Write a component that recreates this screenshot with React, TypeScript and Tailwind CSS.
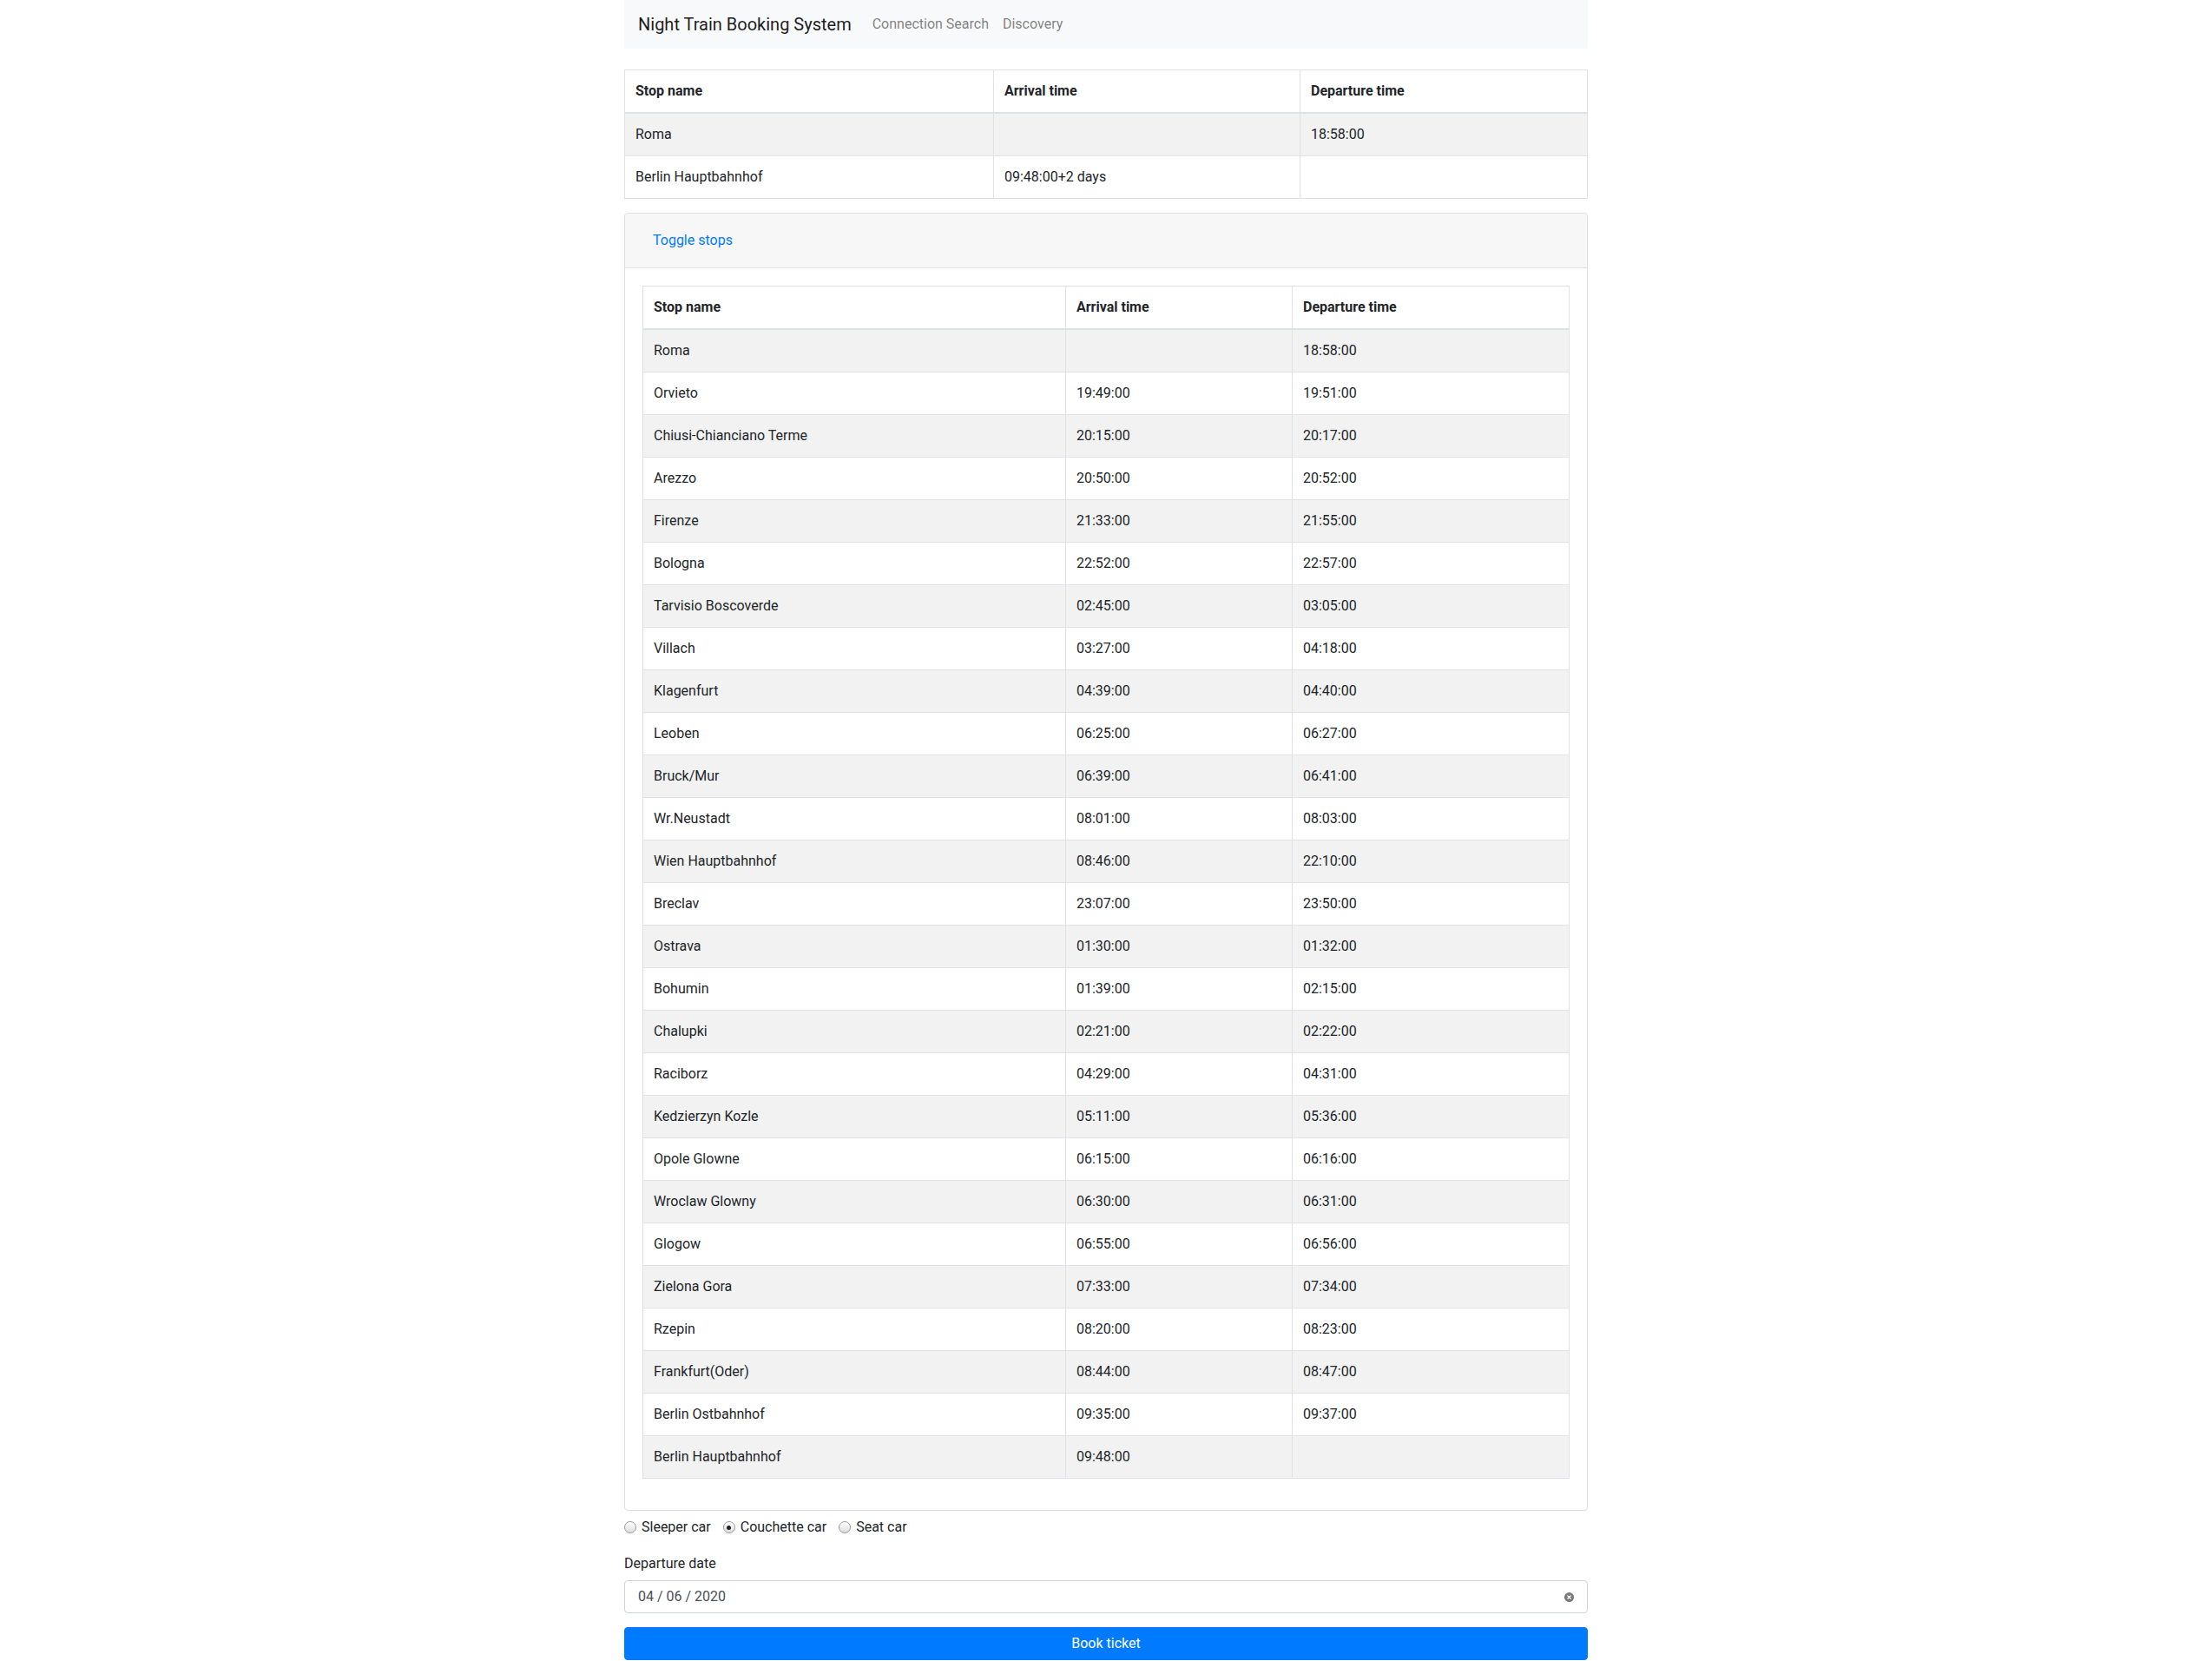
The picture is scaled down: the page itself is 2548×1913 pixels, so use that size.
import React from "react";

const stops: [string, string, string][] = [
  ["Roma", "", "18:58:00"],
  ["Orvieto", "19:49:00", "19:51:00"],
  ["Chiusi-Chianciano Terme", "20:15:00", "20:17:00"],
  ["Arezzo", "20:50:00", "20:52:00"],
  ["Firenze", "21:33:00", "21:55:00"],
  ["Bologna", "22:52:00", "22:57:00"],
  ["Tarvisio Boscoverde", "02:45:00", "03:05:00"],
  ["Villach", "03:27:00", "04:18:00"],
  ["Klagenfurt", "04:39:00", "04:40:00"],
  ["Leoben", "06:25:00", "06:27:00"],
  ["Bruck/Mur", "06:39:00", "06:41:00"],
  ["Wr.Neustadt", "08:01:00", "08:03:00"],
  ["Wien Hauptbahnhof", "08:46:00", "22:10:00"],
  ["Breclav", "23:07:00", "23:50:00"],
  ["Ostrava", "01:30:00", "01:32:00"],
  ["Bohumin", "01:39:00", "02:15:00"],
  ["Chalupki", "02:21:00", "02:22:00"],
  ["Raciborz", "04:29:00", "04:31:00"],
  ["Kedzierzyn Kozle", "05:11:00", "05:36:00"],
  ["Opole Glowne", "06:15:00", "06:16:00"],
  ["Wroclaw Glowny", "06:30:00", "06:31:00"],
  ["Glogow", "06:55:00", "06:56:00"],
  ["Zielona Gora", "07:33:00", "07:34:00"],
  ["Rzepin", "08:20:00", "08:23:00"],
  ["Frankfurt(Oder)", "08:44:00", "08:47:00"],
  ["Berlin Ostbahnhof", "09:35:00", "09:37:00"],
  ["Berlin Hauptbahnhof", "09:48:00", ""],
];

const summary: [string, string, string][] = [
  ["Roma", "", "18:58:00"],
  ["Berlin Hauptbahnhof", "09:48:00+2 days", ""],
];

function StopTable({
  rows,
  widths,
}: {
  rows: [string, string, string][];
  widths: [string, string, string];
}) {
  return (
    <table className="w-full table-fixed border-collapse border border-[#dee2e6] text-[16px] leading-6 text-[#212529]">
      <colgroup>
        <col className={widths[0]} />
        <col className={widths[1]} />
        <col />
      </colgroup>
      <thead>
        <tr>
          <th className="border border-[#dee2e6] border-b-2 px-3 py-3 text-left font-bold align-bottom">
            Stop name
          </th>
          <th className="border border-[#dee2e6] border-b-2 px-3 py-3 text-left font-bold align-bottom">
            Arrival time
          </th>
          <th className="border border-[#dee2e6] border-b-2 px-3 py-3 text-left font-bold align-bottom">
            Departure time
          </th>
        </tr>
      </thead>
      <tbody>
        {rows.map((r, i) => (
          <tr key={i} className={i % 2 === 0 ? "bg-[#f2f2f2]" : "bg-white"}>
            <td className="border border-[#dee2e6] px-3 py-3">{r[0]}</td>
            <td className="border border-[#dee2e6] px-3 py-3">{r[1]}</td>
            <td className="border border-[#dee2e6] px-3 py-3">{r[2]}</td>
          </tr>
        ))}
      </tbody>
    </table>
  );
}

function Radio({ label, checked }: { label: string; checked?: boolean }) {
  return (
    <label className="inline-flex items-center mr-[14px]">
      <span className="w-[14px] h-[14px] rounded-full border border-[#9a9a9a] bg-gradient-to-b from-white to-[#dedede] flex items-center justify-center mr-[6px]">
        {checked && <span className="w-[5px] h-[5px] rounded-full bg-[#222]" />}
      </span>
      <span>{label}</span>
    </label>
  );
}

export default function App() {
  return (
    <div
      className="min-h-screen bg-white text-[#212529] text-[16px] leading-6"
      style={{ fontFamily: "Roboto, 'Noto Sans', sans-serif" }}
    >
      <div className="w-[1140px] mx-auto px-[15px]">
        <nav className="bg-[#f8f9fa] h-[56px] px-4 flex items-center">
          <span className="text-[20px] leading-[30px] text-[rgba(0,0,0,0.9)] mr-4">
            Night Train Booking System
          </span>
          <span className="px-2 text-[rgba(0,0,0,0.5)]">Connection Search</span>
          <span className="px-2 text-[rgba(0,0,0,0.5)]">Discovery</span>
        </nav>

        <div className="mt-6 mb-4">
          <StopTable rows={summary} widths={["w-[425px]", "w-[353px]", ""]} />
        </div>

        <div className="border border-[#dfdfdf] rounded">
          <div className="bg-[#f7f7f7] border-b border-[#dfdfdf] px-5 py-3 rounded-t">
            <span className="inline-block px-3 py-[7px] text-[#007bff] leading-6">Toggle stops</span>
          </div>
          <div className="p-5">
            <div className="mb-4">
              <StopTable rows={stops} widths={["w-[487px]", "w-[261px]", ""]} />
            </div>
          </div>
        </div>

        <div className="mt-[7px] flex items-center h-6">
          <Radio label="Sleeper car" />
          <Radio label="Couchette car" checked />
          <Radio label="Seat car" />
        </div>

        <div className="mt-[18px]">
          <div className="mb-[7px]">Departure date</div>
          <div className="h-[38px] border border-[#ced4da] rounded flex items-center justify-between pl-[15px] pr-[15px] text-[#495057]">
            <span>04 / 06 / 2020</span>
            <span className="w-[11px] h-[11px] rounded-full bg-[#7a7a7a] flex items-center justify-center">
              <svg width="7" height="7" viewBox="0 0 7 7">
                <path d="M1.5 1.5 L5.5 5.5 M5.5 1.5 L1.5 5.5" stroke="white" strokeWidth="1.3" />
              </svg>
            </span>
          </div>
        </div>

        <button className="mt-4 w-full h-[38px] bg-[#007bff] text-white rounded border border-[#007bff] leading-6">
          Book ticket
        </button>
      </div>
    </div>
  );
}
